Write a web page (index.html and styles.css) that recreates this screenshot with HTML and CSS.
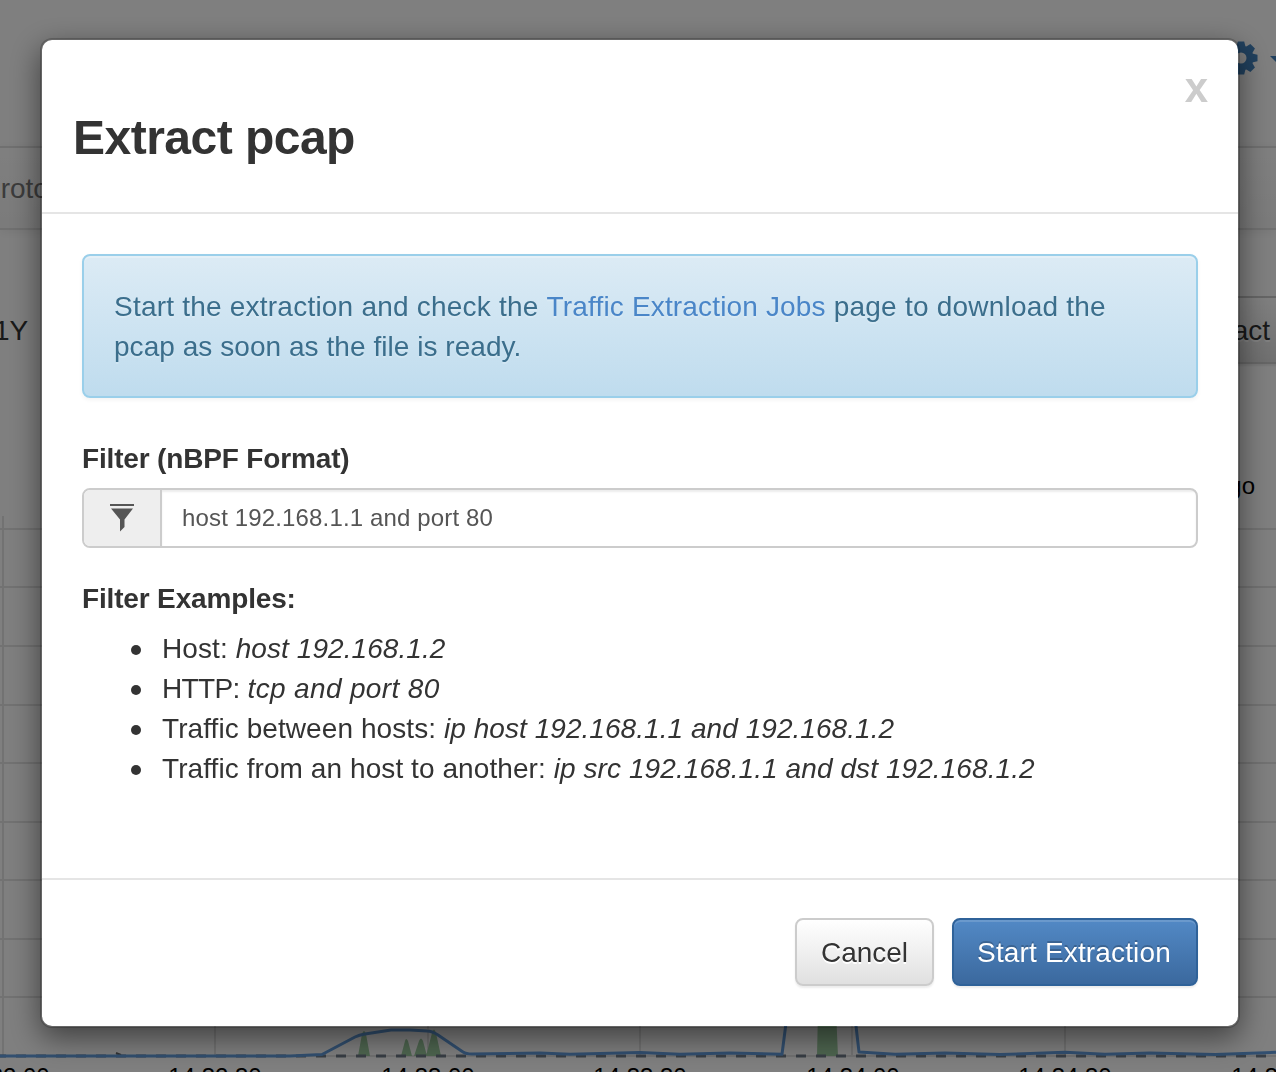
FILE: index.html
```html
<!DOCTYPE html>
<html lang="en">
<head>
<meta charset="utf-8">
<title>Extract pcap</title>
<link rel="stylesheet" href="styles.css">
</head>
<body>
<div class="page">
  <header class="topbar">
    <svg class="gear" viewBox="-17 -17 34 34"><g fill="#4383be"><path id="tooth" d="M-4.6 -11L-3.2 -16.5H3.2L4.6 -11V11L3.2 16.5H-3.2L-4.6 11Z"/><use href="#tooth" transform="rotate(45)"/><use href="#tooth" transform="rotate(90)"/><use href="#tooth" transform="rotate(135)"/><circle r="12.5"/></g><circle r="5.5" fill="#fff"/></svg>
    <span class="caret"></span>
  </header>
  <nav class="navbar"><span>Protocols</span></nav>
  <div class="range"><span class="year">1Y</span><button class="btn page-btn">Extract</button></div>
  <div class="legend">ago</div>
  <svg class="chart" viewBox="0 510 1276 562">
    <g stroke="#e4e4e4" stroke-width="2">
      <path d="M0 529H1276M0 587H1276M0 646H1276M0 705H1276M0 763H1276M0 822H1276M0 880H1276M0 939H1276M0 997H1276M0 1056H1276"/>
      <path d="M3 516V1056M215 516V1056M428 516V1056M640 516V1056M852 516V1056M1065 516V1056"/>
    </g>
    <path fill="#9dcca0" d="M358 1056L362 1034Q364 1028 366 1034L370 1056ZM401 1056L405 1041Q406 1037 408 1041L412 1056ZM414 1056L419 1041Q421 1036 423 1041L427 1056ZM426 1056L432 1033Q434 1026 436 1033L441 1056ZM817 1056L818 1010H836L838 1056Z"/>
    <path d="M0 1056H1276" fill="none" stroke="#717c8a" stroke-width="3" stroke-dasharray="10 10" stroke-dashoffset="4"/>
    <path d="M116 1053L121 1055" stroke="#666" stroke-width="2"/>
    <path fill="none" stroke="#649fe0" stroke-width="3" stroke-linejoin="round" d="M0 1056H290L322 1054.5L355 1037Q359 1035 365 1034L391 1030H410L427 1031Q432 1031 438 1035L463 1052Q466 1054 472 1054L540 1053L570 1054.3L640 1052.5L680 1054.3L730 1053L782 1054.3L789 1000H853L859 1052L895 1054.3L945 1053L1000 1054.5L1065 1052.3L1105 1054.3L1150 1053L1215 1054.5L1276 1052.3"/>
    <g class="ticks"><text x="3" y="1085">14:32:00</text><text x="215" y="1085">14:32:30</text><text x="428" y="1085">14:33:00</text><text x="640" y="1085">14:33:30</text><text x="853" y="1085">14:34:00</text><text x="1065" y="1085">14:34:30</text><text x="1278" y="1085">14:35:00</text></g>
  </svg>
</div>
<div class="backdrop">
  <section class="modal">
    <div class="modal-header">
      <button class="close">x</button>
      <h3>Extract pcap</h3>
    </div>
    <div class="modal-body">
      <div class="alert">Start the extraction and check the <a>Traffic Extraction Jobs</a> page to download the <span class="snug">pcap as soon as the file is ready.</span></div>
      <label class="label">Filter (nBPF Format)</label>
      <div class="input-group">
        <span class="addon"><svg width="24" height="28" viewBox="0 0 24 28" fill="#555"><path d="M0 0H24V2H0ZM1 4.5H23L14.5 15.5V23L10 27.5V15.5Z"/></svg></span>
        <div class="field">host 192.168.1.1 and port 80</div>
      </div>
      <div class="label">Filter Examples:</div>
      <ul>
        <li>Host: <i>host 192.168.1.2</i></li>
        <li><span class="tight">HTTP:</span> <i class="wide">tcp and port 80</i></li>
        <li>Traffic between hosts: <i class="snug">ip host 192.168.1.1 and 192.168.1.2</i></li>
        <li>Traffic from an host to another: <i>ip src 192.168.1.1 and dst 192.168.1.2</i></li>
      </ul>
    </div>
    <footer class="modal-footer">
      <button class="btn cancel">Cancel</button>
      <button class="btn primary">Start Extraction</button>
    </footer>
  </section>
</div>
</body>
</html>
```
FILE: styles.css
```css
* { box-sizing: border-box; }
body {
  margin: 0;
  height: 1072px;
  overflow: hidden;
  background: #fff;
  color: #333;
  font: 28px/40px "Liberation Sans", Arial, sans-serif;
}
button { font: inherit; }

.page { display: flex; flex-direction: column; height: 1072px; overflow: hidden; }
.topbar { display: flex; height: 146px; padding: 41px 0 0 1224px; flex: none; }
.gear { width: 34px; height: 34px; flex: none; }
.caret {
  flex: none;
  height: 0;
  margin: 15px 0 0 12px;
  border: 8px solid transparent;
  border-top-color: #4383be;
  border-bottom: 0;
}
.navbar {
  flex: none;
  height: 84px;
  padding-top: 21px;
  border: solid #e0e0e0;
  border-width: 2px 0;
  background: linear-gradient(#fff, #f6f6f6);
  box-shadow: 0 2px 10px rgba(0, 0, 0, .07);
  color: #777;
}
.navbar span { margin-left: -18px; }
.range { display: flex; justify-content: space-between; flex: none; height: 134px; padding-top: 66px; }
.year { margin: 15px 0 0 -6px; }
.page-btn { margin-right: -18px; }
.legend { flex: none; height: 146px; padding: 102px 21px 0 0; text-align: right; font-size: 24px; color: #000; }
.chart { display: block; flex: none; width: 1276px; height: 562px; }
.ticks { font-size: 24px; text-anchor: middle; fill: #000; }

.backdrop { position: fixed; inset: 0; padding: 38px 36px 0 40px; background: rgba(0, 0, 0, .5); }
.modal {
  display: flex;
  flex-direction: column;
  width: 1200px;
  height: 990px;
  border: 2px solid rgba(0, 0, 0, .2);
  border-radius: 12px;
  background: #fff;
  background-clip: padding-box;
  box-shadow: 0 10px 30px rgba(0, 0, 0, .5);
}
.modal-header { height: 174px; padding: 30px; border-bottom: 2px solid #e5e5e5; }
.close {
  float: right;
  margin-top: -3px;
  padding: 0;
  border: 0;
  background: none;
  font-size: 42px;
  font-weight: bold;
  line-height: 42px;
  color: #ccc;
}
h3 { margin: 41px 0 0 1px; font-size: 48px; line-height: 53px; letter-spacing: -.52px; }
.modal-body { flex: 1; padding: 40px; }
.alert {
  height: 144px;
  margin-bottom: 41px;
  padding: 31px 30px 29px;
  border: 2px solid #9acfea;
  border-radius: 8px;
  background: linear-gradient(#dcebf5, #bfdcee);
  box-shadow: inset 0 2px 0 rgba(255, 255, 255, .25), 0 2px 4px rgba(0, 0, 0, .05);
  color: #3b6e8c;
  letter-spacing: .22px;
  text-shadow: 0 2px 0 rgba(255, 255, 255, .2);
}
.alert a { color: #4a86c8; letter-spacing: .16px; }
.snug { letter-spacing: .05px; }
.label { display: block; font-weight: bold; letter-spacing: -.16px; }
.input-group {
  display: flex;
  height: 60px;
  margin: 9px 0 31px;
  border: 2px solid #ccc;
  border-radius: 8px;
  overflow: hidden;
}
.addon { display: flex; align-items: center; justify-content: center; width: 78px; border-right: 2px solid #ccc; background: #eee; }
.field { flex: 1; padding: 8px 20px; font-size: 24px; letter-spacing: .15px; color: #555; box-shadow: inset 0 2px 2px rgba(0, 0, 0, .075); }
ul { margin: 10px 0 0; padding-left: 80px; list-style: none; letter-spacing: .08px; }
li::before {
  content: "";
  display: inline-block;
  width: 10px;
  height: 10px;
  margin: 0 21px 3px -31px;
  border-radius: 50%;
  background: #333;
}
.tight { letter-spacing: -.65px; }
.wide { letter-spacing: .35px; }
.modal-footer { display: flex; justify-content: flex-end; gap: 18px; height: 148px; padding: 38px 40px; border-top: 2px solid #e5e5e5; }
.btn {
  height: 68px;
  padding: 2px 22px 0;
  border: 2px solid #ccc;
  border-radius: 8px;
  background: linear-gradient(#fff, #e0e0e0);
  box-shadow: inset 0 2px 0 rgba(255, 255, 255, .15), 0 2px 2px rgba(0, 0, 0, .075);
  color: #333;
  text-shadow: 0 2px 0 #fff;
  white-space: nowrap;
}
.cancel { width: 139px; }
.primary {
  width: 246px;
  padding-right: 24px;
  border-color: #2f6299;
  background: linear-gradient(#5289c5, #3b699e);
  color: #fff;
  letter-spacing: .15px;
  text-shadow: 0 -2px 0 rgba(0, 0, 0, .2);
}
```
